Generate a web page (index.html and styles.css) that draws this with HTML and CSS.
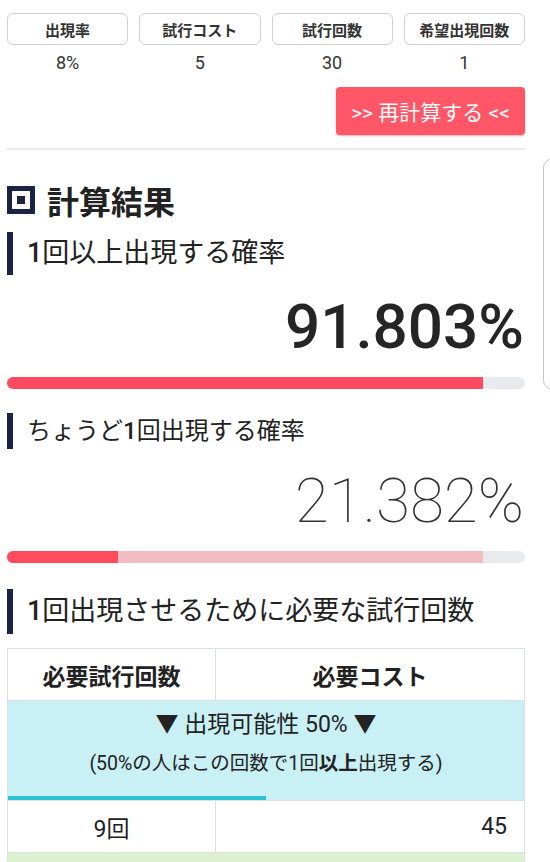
FILE: index.html
```html
<!DOCTYPE html>
<html lang="ja">
<head>
<meta charset="utf-8">
<title>計算結果</title>
<link rel="stylesheet" href="styles.css">
</head>
<body>
<div class="page">
  <div class="params">
    <div class="param"><div class="label">出現率</div><div class="value">8%</div></div>
    <div class="param"><div class="label">試行コスト</div><div class="value">5</div></div>
    <div class="param"><div class="label">試行回数</div><div class="value">30</div></div>
    <div class="param"><div class="label">希望出現回数</div><div class="value">1</div></div>
  </div>
  <div class="actions"><button class="recalc">&gt;&gt; 再計算する &lt;&lt;</button></div>
  <hr class="sep">
  <h2 class="result-title"><span class="icon"><span class="icon-dot"></span></span>計算結果</h2>

  <h3 class="sub sub-lg"><span class="num">1</span>回以上出現する確率</h3>
  <div class="big big-bold">91.803%</div>
  <div class="bar"><div class="fill" style="width:91.803%"></div></div>

  <h3 class="sub sub-md">ちょうど<span class="num">1</span>回出現する確率</h3>
  <div class="big big-thin">21.382%</div>
  <div class="bar"><div class="fill-bg" style="width:91.803%"></div><div class="fill" style="width:21.382%"></div></div>

  <h3 class="sub sub-lg sub-last"><span class="num">1</span>回出現させるために必要な試行回数</h3>
  <table class="need">
    <thead>
      <tr><th class="c1">必要試行回数</th><th class="c2">必要コスト</th></tr>
    </thead>
    <tbody>
      <tr class="chance chance-50">
        <td colspan="2">
          <div class="chance-title">▼ 出現可能性 50% ▼</div>
          <div class="chance-note">(50%の人はこの回数で1回<b>以上</b>出現する)</div>
          <div class="chance-bar" style="width:50%"></div>
        </td>
      </tr>
      <tr class="data"><td class="tries">9回</td><td class="cost">45</td></tr>
      <tr class="chance chance-80">
        <td colspan="2"></td>
      </tr>
    </tbody>
  </table>
</div>
<div class="side-panel"></div>
</body>
</html>
```
FILE: styles.css
```css
html, body {
  overflow: hidden;
}
body {
  margin: 0;
  background: #ffffff;
  color: #222222;
  font-family: Roboto, "Noto Sans CJK JP", sans-serif;
}
.page {
  width: 518px;
  margin-left: 7px;
  padding-top: 13px;
}
.params {
  display: grid;
  grid-template-columns: repeat(4, 1fr);
  column-gap: 11px;
}
.param {
  display: flex;
  flex-direction: column;
  align-items: stretch;
}
.label {
  height: 30px;
  border: 1px solid #cfcfcf;
  border-radius: 6px;
  display: flex;
  align-items: center;
  justify-content: center;
  font-size: 15px;
  font-weight: 700;
  color: #333333;
}
.value {
  margin-top: 6px;
  line-height: 24px;
  text-align: center;
  font-size: 18px;
  color: #333333;
}
.actions {
  display: flex;
  justify-content: flex-end;
  margin-top: 12px;
}
.recalc {
  width: 189px;
  height: 48px;
  border: none;
  border-radius: 4px;
  background: #ff5767;
  box-shadow: 0 1px 2px rgba(160, 30, 45, 0.35);
  color: #ffffff;
  font-family: Roboto, "Noto Sans CJK JP", sans-serif;
  font-size: 21px;
  padding: 0;
}
.sep {
  margin: 13px 0 0 0;
  border: none;
  height: 2px;
  background: #ebebeb;
}
.result-title {
  margin: 30px 0 0 0;
  height: 40px;
  display: flex;
  align-items: center;
  font-size: 32px;
  font-weight: 700;
  color: #222222;
}
.icon {
  width: 18px;
  height: 18px;
  border: 5px solid #1c2443;
  margin-right: 12px;
  display: flex;
  align-items: center;
  justify-content: center;
}
.icon-dot {
  width: 8px;
  height: 8px;
  background: #1c2443;
}
.sub {
  margin: 0;
  border-left: 6px solid #1c2443;
  padding-left: 14px;
  font-weight: 400;
  color: #222222;
}
.sub .num {
  font-weight: 500;
}
.sub-lg {
  margin-top: 12px;
  font-size: 27px;
  line-height: 43px;
}
.sub-md {
  margin-top: 24px;
  font-size: 24px;
  line-height: 36px;
}
.sub-last {
  margin-top: 26px;
  line-height: 45px;
}
.big {
  line-height: 64px;
  text-align: right;
}
.big-bold {
  margin-top: 20px;
  font-size: 62px;
  font-weight: 500;
  color: #252525;
  padding-right: 1px;
}
.big-thin {
  margin-top: 20px;
  font-size: 62px;
  font-weight: 100;
  color: #333333;
  padding-right: 1px;
}
.bar {
  position: relative;
  height: 12px;
  border-radius: 6px;
  background: #e9eaee;
  overflow: hidden;
  margin-top: 18px;
}
.big-thin + .bar {
  margin-top: 18px;
}
.fill, .fill-bg {
  position: absolute;
  left: 0;
  top: 0;
  bottom: 0;
}
.fill {
  background: #ff4b5d;
}
.fill-bg {
  background: #f3bcc3;
}
.need {
  width: 100%;
  margin-top: 14px;
  border-collapse: collapse;
  table-layout: fixed;
}
.need th, .need td {
  border: 1px solid #dde1e6;
  padding: 0;
}
.need th {
  height: 51px;
  font-size: 23px;
  font-weight: 700;
  color: #222222;
  text-align: center;
}
.need .c1 {
  width: 207px;
}
.chance td {
  text-align: center;
  color: #222222;
}
.chance-50 td {
  background: #c9f0f4;
  height: 99px;
  vertical-align: top;
}
.chance-title {
  margin-top: 9px;
  font-size: 23px;
  line-height: 30px;
}
.chance-note {
  margin-top: 9px;
  font-size: 19.5px;
  line-height: 30px;
}
.chance-note b {
  font-weight: 700;
}
.chance-bar {
  margin-top: 17px;
  height: 4px;
  background: #2bc3d3;
}
.data td {
  height: 51px;
  font-size: 23px;
  color: #222222;
}
.data .tries {
  text-align: center;
}
.data .cost {
  text-align: right;
  padding-right: 17px;
}
.chance-80 td {
  background: #dcf1cd;
  height: 60px;
}
.side-panel {
  position: absolute;
  left: 543px;
  top: 158px;
  width: 40px;
  height: 230px;
  border: 1px solid #c8c8c8;
  border-radius: 10px;
  background: #ffffff;
}
```
